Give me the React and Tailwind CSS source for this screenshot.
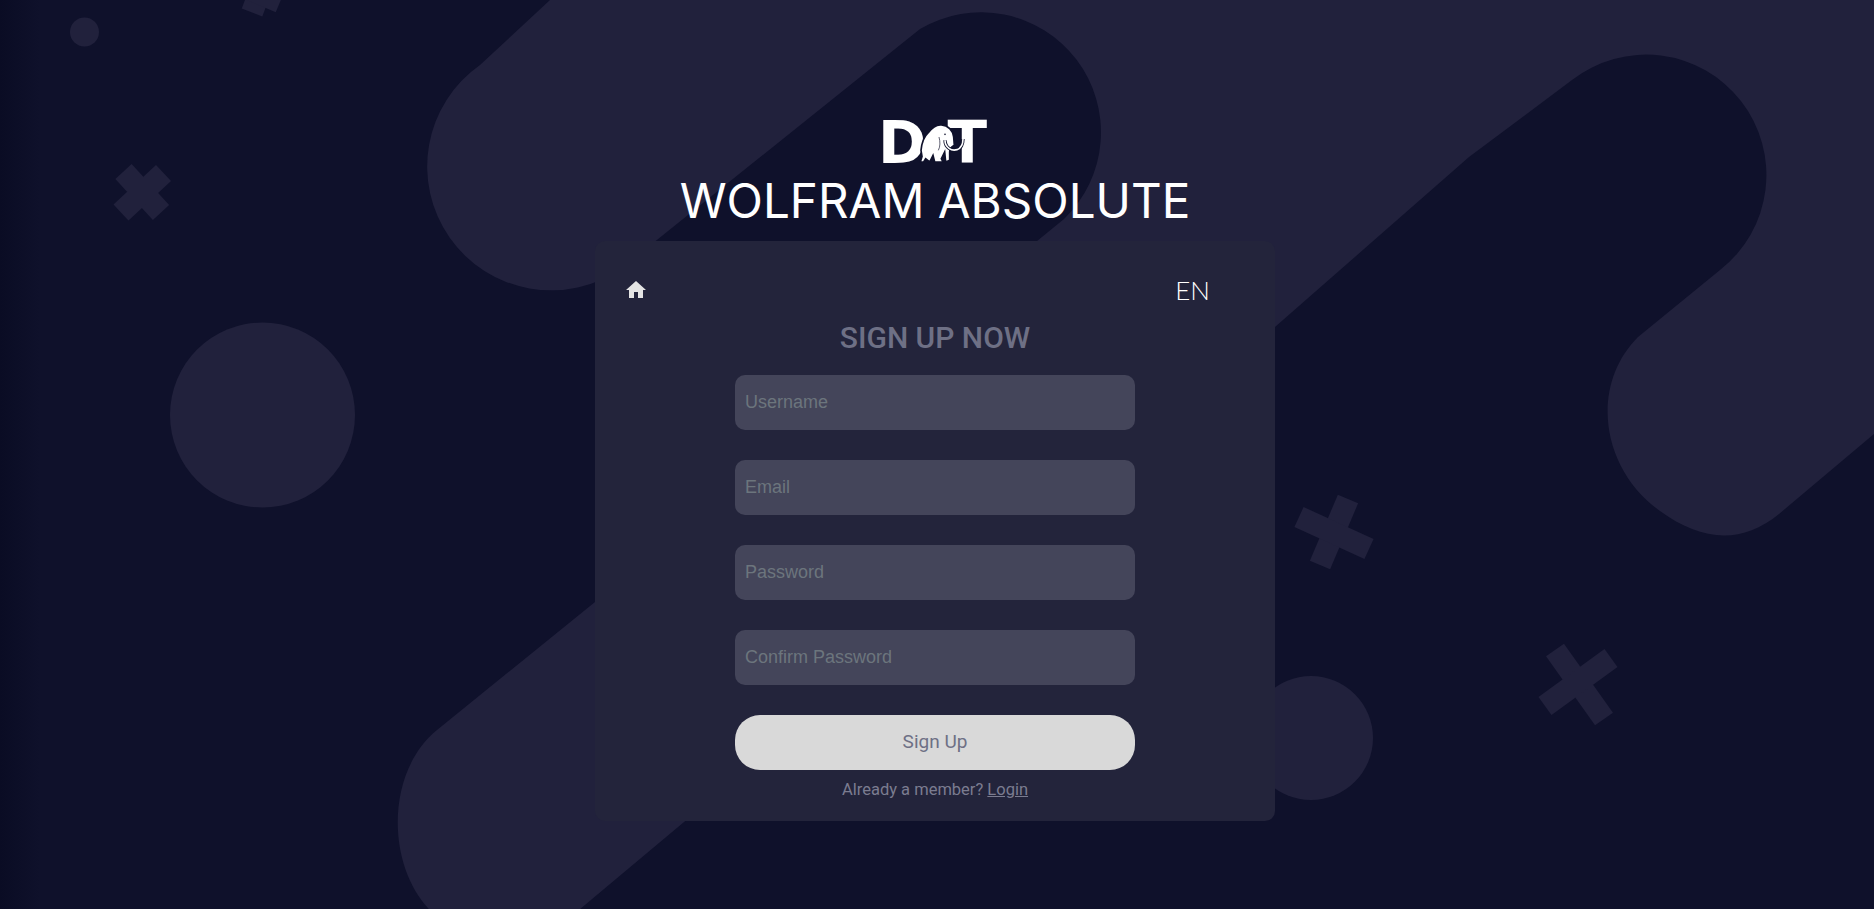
import React from 'react';

const fields = [
  { name: 'username', type: 'text', placeholder: 'Username' },
  { name: 'email', type: 'email', placeholder: 'Email' },
  { name: 'password', type: 'password', placeholder: 'Password' },
  { name: 'confirm', type: 'password', placeholder: 'Confirm Password' },
];

const crosses = [
  ['M252 12.5L270 -35', 'M232 -18L280 2'],
  ['M123.5 171.5L161 212.5', 'M163.5 173L121 212.5'],
  ['M1348 499L1320 565', 'M1369 549L1299 517'],
  ['M1555 650L1604 719', 'M1611 658L1545 706'],
];

function Backdrop() {
  return (
    <svg className="absolute inset-0 w-full h-full" viewBox="0 0 1874 909" preserveAspectRatio="none">
      <path
        fill="#21213c"
        d="M550 0L480 65A100 100 0 0 0 622 268L920 29A120 120 0 0 1 1064 219L595 602L437 730C385 772 385 870 435 915L573 915L1275 327L1469 157L1572 80A100 100 0 0 1 1720 270L1638 337C1590 385 1600 468 1660 511C1700 540 1740 546 1779 514L1874 434L1874 0Z"
      />
      <circle cx="262.5" cy="415" r="92.5" fill="#21213c" />
      <circle cx="84.5" cy="32" r="14.5" fill="#21213c" />
      <circle cx="1311" cy="738" r="62" fill="#21213c" />
      {crosses.map((lines, i) => (
        <g key={i} stroke="#21213c" strokeWidth="22">
          <path d={lines[0]} />
          <path d={lines[1]} />
        </g>
      ))}
    </svg>
  );
}

function Logo() {
  return (
    <div className="relative w-[104px] h-[42px] flex justify-between text-white font-bold text-[58px] leading-[42px] font-['DejaVu_Sans',sans-serif]">
      <span className="-ml-[5px]">D</span>
      <span>T</span>
      <svg className="absolute left-[34px] top-[1px] w-[52px] h-[44px]" viewBox="112 18 156 132">
        <path
          fill="#fff"
          stroke="#0f112b"
          strokeWidth="5"
          d="M122 135L127 118L124 100C126 80 132 60 145 48C155 35 170 22 185 24C205 25 220 40 222 60L224 85C215 90 210 95 210 105L210 130L198 135L195 105L185 125L190 135L165 135L160 115L150 135L138 125L132 135Z"
        />
        <path d="M196 70C196 92 216 103 232 98C243 94 250 84 250 66" fill="none" stroke="#0f112b" strokeWidth="10" />
        <path d="M196 70C196 92 216 103 232 98C243 94 250 84 250 66" fill="none" stroke="#fff" strokeWidth="5" />
        <path d="M178 60C182 75 182 88 176 100" fill="none" stroke="#0f112b" strokeWidth="2" />
        <circle cx="196" cy="52" r="2.5" fill="#0f112b" />
      </svg>
    </div>
  );
}

export default function App() {
  return (
    <div className="relative w-full h-screen overflow-hidden bg-[#0f112b] font-['Roboto',sans-serif]">
      <div className="absolute inset-y-0 left-0 w-[40px] bg-gradient-to-r from-[#0a0c24] to-transparent" />
      <Backdrop />
      <div className="relative flex flex-col items-center pt-[122px] pr-1">
        <Logo />
        <h1 className="mt-[11px] h-[51px] text-[47.6px] leading-[51px] font-normal text-white whitespace-nowrap font-['Inter',sans-serif]">
          WOLFRAM ABSOLUTE
        </h1>
        <div className="mt-[15px] w-[680px] h-[580px] rounded-[10px] bg-[#23243b] pt-[34px] flex flex-col items-center">
          <div className="w-full h-[30px] flex items-center justify-between pl-[29px] pr-[65px]">
            <a href="#home" className="text-[#e4e4e4]">
              <svg className="w-6 h-6" viewBox="0 0 24 24" fill="currentColor">
                <path d="M10 20v-6h4v6h5v-8h3L12 3 2 12h3v8z" />
              </svg>
            </a>
            <button type="button" className="text-[26px] leading-[30px] font-light text-white font-['Lato',sans-serif]">
              EN
            </button>
          </div>
          <h2 className="mt-[15px] h-[36px] text-[30px] leading-[36px] font-medium text-[#6e7085]">SIGN UP NOW</h2>
          <form className="mt-[19px] w-[400px] flex flex-col gap-[30px]">
            {fields.map((f) => (
              <input
                key={f.name}
                name={f.name}
                type={f.type}
                placeholder={f.placeholder}
                className="h-[55px] w-full rounded-[10px] bg-[#44455a] px-[10px] text-[18px] text-white outline-none font-['Liberation_Sans',sans-serif] placeholder:text-[#6c757d]"
              />
            ))}
            <button type="button" className="h-[55px] w-full rounded-[25px] bg-[#d9d9d9] text-[19px] text-[#6e7085]">
              Sign Up
            </button>
          </form>
          <p className="mt-[10px] h-[20px] text-[16.5px] leading-[20px] text-[#7b7c90]">
            Already a member? <a href="#login" className="underline">Login</a>
          </p>
        </div>
      </div>
    </div>
  );
}
